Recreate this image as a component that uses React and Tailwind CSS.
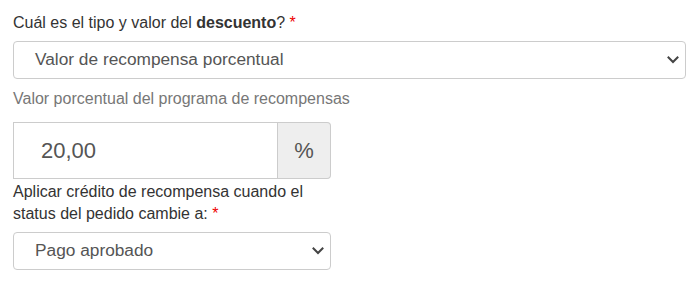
import React from 'react';

function Chevron() {
  return (
    <svg width="12" height="8" viewBox="0 0 12 8" fill="none" className="shrink-0">
      <path d="M1.5 1.5L6 6L10.5 1.5" stroke="#444" strokeWidth="2" strokeLinecap="square" />
    </svg>
  );
}

function FakeSelect({ value, className = '' }) {
  return (
    <div
      className={`h-[38px] flex items-center justify-between pl-[21px] pr-[6px] bg-white border border-[#ccc] rounded-[4px] text-[17.3px] text-[#555] ${className}`}
    >
      <span>{value}</span>
      <Chevron />
    </div>
  );
}

function App() {
  return (
    <div
      className="w-[699px] h-[288px] bg-white px-[13px] pt-[12px] text-[#333] text-[16px]"
      style={{ fontFamily: '"Liberation Sans", Arial, sans-serif' }}
    >
      {/* descuento */}
      <div className="leading-[22px]">
        Cuál es el tipo y valor del <b className="font-bold">descuento</b>? <span className="text-[#e00]">*</span>
      </div>
      <FakeSelect value="Valor de recompensa porcentual" className="mt-[7px]" />
      <div className="mt-[9px] leading-[22px] text-[#777]">Valor porcentual del programa de recompensas</div>

      <div className="w-[318px]">
        {/* input group */}
        <div className="mt-[12px] h-[57px] flex">
          <div className="flex-1 flex items-center pl-[27px] border border-[#ccc] text-[22px] text-[#555] bg-white">
            20,00
          </div>
          <div className="w-[53px] flex items-center justify-center bg-[#eee] border border-l-0 border-[#ccc] rounded-r-[4px] text-[22px] text-[#555]">
            %
          </div>
        </div>

        <div className="mt-[2px] leading-[22px]">
          Aplicar crédito de recompensa cuando el status del pedido cambie a: <span className="text-[#e00]">*</span>
        </div>
        <FakeSelect value="Pago aprobado" className="mt-[7px]" />
      </div>
    </div>
  );
}

export default App;
